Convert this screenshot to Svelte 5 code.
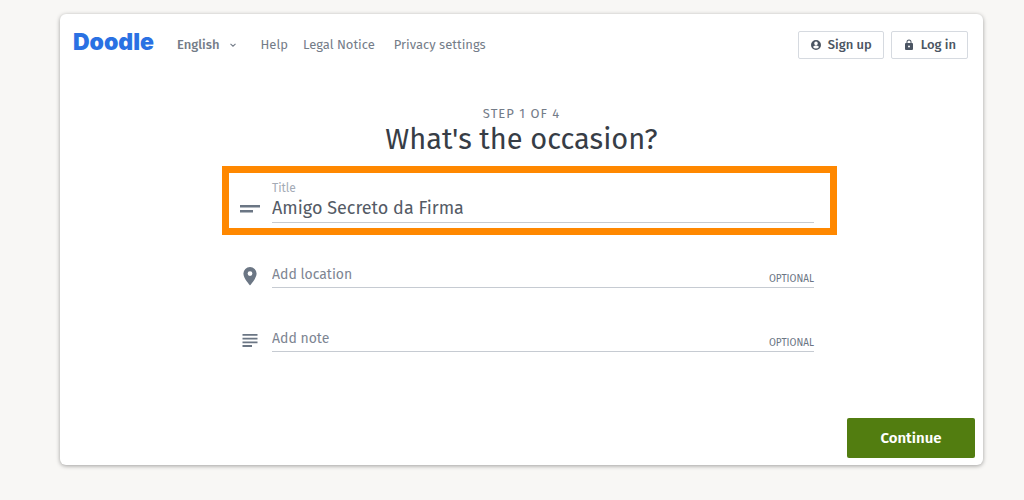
<script>
  let title = $state('Amigo Secreto da Firma');
  let location = $state('');
  let note = $state('');
</script>

<div class="page">
  <div class="card">
    <header>
      <a class="logo" href="#home">Doodle</a>
      <button class="language" type="button">
        English
        <svg width="8" height="8" viewBox="0 0 8 8" aria-hidden="true"><path d="M1.5 2.800 4 5.200 6.500 2.800" fill="none" stroke="currentColor" stroke-width="1.1" /></svg>
      </button>
      <nav>
        <a href="#help">Help</a>
        <a href="#legal">Legal Notice</a>
        <a class="privacy" href="#privacy">Privacy settings</a>
      </nav>
      <div class="account">
        <button type="button">
          <svg width="12" height="12" viewBox="0 0 24 24" aria-hidden="true"><path fill="currentColor" fill-rule="evenodd" d="M12 2a10 10 0 1 0 0 20 10 10 0 0 0 0-20zm0 3.200a3.600 3.600 0 1 1 0 7.200 3.600 3.600 0 0 1 0-7.200zm0 14a7.200 7.200 0 0 1-6-3.200c0-2 4-3.100 6-3.100s6 1.100 6 3.100a7.200 7.200 0 0 1-6 3.200z" /></svg>
          Sign up
        </button>
        <button type="button">
          <svg width="12" height="12" viewBox="0 0 24 24" aria-hidden="true"><path fill="currentColor" fill-rule="evenodd" d="M18 8h-1V6A5 5 0 0 0 7 6v2H6a2 2 0 0 0-2 2v10a2 2 0 0 0 2 2h12a2 2 0 0 0 2-2V10a2 2 0 0 0-2-2zM8.900 8V6a3.100 3.100 0 0 1 6.200 0v2zM12 17a2 2 0 1 1 0-4 2 2 0 0 1 0 4z" /></svg>
          Log in
        </button>
      </div>
    </header>

    <main>
      <p class="step">STEP 1 OF 4</p>
      <h1>What's the occasion?</h1>
      <form>
        <div class="row highlight">
          <svg width="20" height="20" viewBox="0 0 20 20" aria-hidden="true"><path fill="currentColor" d="M0 5h20v2.500H0zM0 10h13v2.500H0z" /></svg>
          <div class="field titled">
            <label for="title">Title</label>
            <input id="title" type="text" bind:value={title} />
          </div>
        </div>
        <div class="row location">
          <svg width="20" height="20" viewBox="0 0 20 20" aria-hidden="true"><path fill="currentColor" fill-rule="evenodd" d="M10 1a6.600 6.600 0 0 0-6.600 6.600C3.400 12.500 10 19.400 10 19.400s6.600-6.900 6.600-11.800A6.600 6.600 0 0 0 10 1zm0 9a2.400 2.400 0 1 1 0-4.800A2.400 2.400 0 0 1 10 10z" /></svg>
          <div class="field">
            <input type="text" aria-label="Add location" placeholder="Add location" bind:value={location} />
            <span class="optional">OPTIONAL</span>
          </div>
        </div>
        <div class="row">
          <svg width="20" height="20" viewBox="0 0 20 20" aria-hidden="true"><path fill="currentColor" d="M2.500 4h15v1.800h-15zM2.500 7.700h15v1.800h-15zM2.500 11.400h15v1.800h-15zM2.500 15.100h9.500v1.800H2.500z" /></svg>
          <div class="field">
            <input type="text" aria-label="Add note" placeholder="Add note" bind:value={note} />
            <span class="optional">OPTIONAL</span>
          </div>
        </div>
      </form>
    </main>

    <footer>
      <button class="continue" type="button">Continue</button>
    </footer>
  </div>
</div>

<style>
  :global(body) {
    margin: 0;
    background: #f8f7f5;
  }
  .page {
    padding: 14px 41px 34px 60px;
    font-family: 'Fira Sans', 'Noto Sans', sans-serif;
    font-size: 13px;
    line-height: 20px;
    color: #747c88;
  }
  * {
    box-sizing: border-box;
  }
  button,
  input {
    font: inherit;
    color: inherit;
  }
  button {
    cursor: pointer;
  }
  a {
    color: inherit;
    text-decoration: none;
  }
  svg {
    flex: none;
  }
  .card {
    background: #fff;
    border-radius: 6px;
    box-shadow: 0 1px 4px rgba(0, 0, 0, 0.36);
  }
  header {
    display: flex;
    align-items: center;
    padding: 17px 15px 0 13px;
  }
  .logo {
    font-family: 'Inter', sans-serif;
    font-size: 23px;
    line-height: 22px;
    font-weight: 900;
    color: #2a71e3;
    margin-bottom: 6px;
  }
  .language {
    display: flex;
    align-items: center;
    gap: 9px;
    margin-left: 23px;
    padding: 0;
    border: 0;
    background: none;
    font-weight: 500;
  }
  nav {
    display: flex;
    gap: 15px;
    margin-left: 24px;
  }
  .privacy {
    margin-left: 4px;
  }
  .account {
    display: flex;
    gap: 7px;
    margin-left: auto;
  }
  .account button {
    display: flex;
    align-items: center;
    gap: 6px;
    height: 28px;
    padding: 0 11px;
    border: 1px solid #d6dae0;
    border-radius: 2px;
    background: #fff;
    color: #4b5563;
    font-weight: 500;
  }
  main {
    padding-top: 45px;
  }
  .step {
    margin: 0;
    text-align: center;
    letter-spacing: 1px;
  }
  h1 {
    margin: 0;
    text-align: center;
    font-size: 29px;
    line-height: 32px;
    font-weight: 400;
    color: #373d46;
  }
  form {
    max-width: 631px;
    margin: 10px auto 0;
    padding-left: 16px;
  }
  .row {
    display: flex;
    align-items: center;
    gap: 12px;
    margin-top: 40px;
    padding: 0 23px 0 18px;
    color: #6b7684;
  }
  .highlight {
    height: 69px;
    margin-top: 0;
    padding: 7px 16px 5px 11px;
    border: 7px solid #ff8800;
  }
  .highlight > svg {
    margin-top: 16px;
  }
  .location {
    margin-top: 29px;
  }
  .field {
    flex: 1;
    display: flex;
    align-items: flex-end;
    height: 24px;
    padding-bottom: 2px;
    border-bottom: 1px solid #c6cbd2;
  }
  .titled {
    flex-direction: column;
    align-items: stretch;
    height: 43px;
  }
  .titled label {
    font-size: 12px;
    line-height: 16px;
    color: #a3abb6;
  }
  .field input {
    flex: 1;
    min-width: 0;
    padding: 0;
    border: 0;
    outline: 0;
    background: none;
    height: 20px;
    font-size: 14px;
  }
  .field.titled input {
    font-size: 18px;
    color: #545b66;
  }
  input::placeholder {
    color: #7d8592;
    opacity: 1;
  }
  .optional {
    font-size: 10px;
    line-height: 12px;
  }
  footer {
    display: flex;
    justify-content: flex-end;
    padding: 66px 8px 7px;
  }
  .continue {
    width: 128px;
    height: 40px;
    border: 0;
    border-radius: 2px;
    background: #527d10;
    color: #fff;
    font-size: 15px;
    font-weight: 600;
  }
</style>
